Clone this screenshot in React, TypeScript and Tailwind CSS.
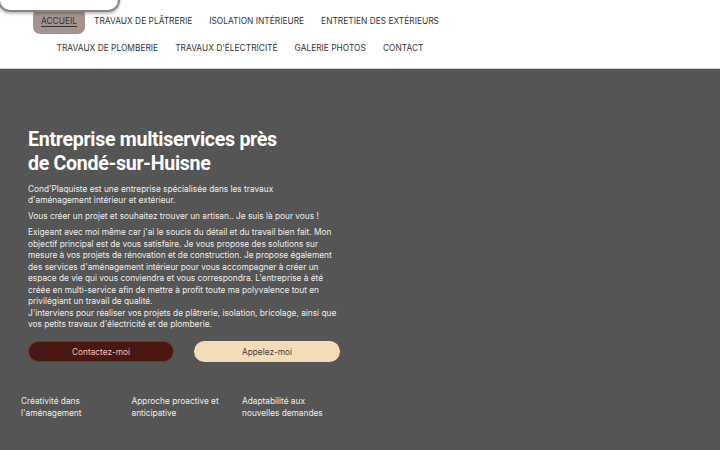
import React from "react";

const row1 = ["ACCUEIL", "TRAVAUX DE PLÂTRERIE", "ISOLATION INTÉRIEURE", "ENTRETIEN DES EXTÉRIEURS"];
const row2 = ["TRAVAUX DE PLOMBERIE", "TRAVAUX D'ÉLECTRICITÉ", "GALERIE PHOTOS", "CONTACT"];

function NavItem({ label, active }: { label: string; active?: boolean }) {
  return (
    <a
      href="#"
      className={
        "h-[26px] px-2 flex items-center rounded-[7px] text-[8.4px] text-[#333] whitespace-nowrap " +
        (active ? "bg-[#a5938f] underline underline-offset-2" : "")
      }
    >
      {label}
    </a>
  );
}

export default function App() {
  const body = { fontFamily: "Inter, 'Noto Sans', sans-serif" };
  return (
    <div className="w-full h-[450px] overflow-hidden bg-[#555555]" style={body}>
      <header className="relative h-[69px] bg-white border-b border-[#cfcfcf]">
        <div className="absolute left-[-2px] top-[-30px] w-[122px] h-[42px] bg-white border-2 border-[#8d8380] rounded-b-[12px] shadow-[0_2px_3px_rgba(0,0,0,0.25)]" />
        <nav className="w-[480px] pt-[8px] flex flex-col items-center">
          <div className="flex gap-px">
            {row1.map((l, i) => (
              <NavItem key={l} label={l} active={i === 0} />
            ))}
          </div>
          <div className="flex gap-px mt-px">
            {row2.map((l) => (
              <NavItem key={l} label={l} />
            ))}
          </div>
        </nav>
      </header>
      <main className="px-[28px] pt-[59px]">
        <h1
          className="text-white text-[19.6px] font-bold leading-[24px] tracking-[-0.3px]"
          style={{ fontFamily: "Roboto, sans-serif" }}
        >
          Entreprise multiservices près
          <br />
          de Condé-sur-Huisne
        </h1>
        <div className="mt-[8px] w-[315px] text-[8.3px] leading-[11.45px] text-[#eeeeee]">
          <p>
            Cond'Plaquiste est une entreprise spécialisée dans les travaux
            <br />
            d'aménagement intérieur et extérieur.
          </p>
          <p className="mt-[4.5px]">Vous créer un projet et souhaitez trouver un artisan.. Je suis là pour vous !</p>
          <p className="mt-[4.5px]">
            Exigeant avec moi même car j'ai le soucis du détail et du travail bien fait. Mon objectif principal est de
            vous satisfaire. Je vous propose des solutions sur mesure à vos projets de rénovation et de construction. Je
            propose également des services d'aménagement intérieur pour vous accompagner à créer un espace de vie qui
            vous conviendra et vous correspondra. L'entreprise à été créée en multi-service afin de mettre à profit toute
            ma polyvalence tout en privilégiant un travail de qualité.
            <br />
            J'interviens pour réaliser vos projets de plâtrerie, isolation, bricolage, ainsi que vos petits travaux
            d'électricité et de plomberie.
          </p>
        </div>
        <div className="mt-[11px] flex gap-[20px]">
          <button className="w-[146px] h-[21px] rounded-full bg-[#4a1711] border border-[#6a3a30] text-[8.3px] text-[#ecc9c0]">
            Contactez-moi
          </button>
          <button className="w-[146px] h-[21px] rounded-full bg-[#f4dcb9] text-[8.3px] text-[#4a3b30]">
            Appelez-moi
          </button>
        </div>
      </main>
      <section className="mt-[34px] pl-[21px] flex text-[8.3px] leading-[11.5px] text-[#eeeeee]">
        <div className="w-[110.5px]">
          Créativité dans
          <br />
          l'aménagement
        </div>
        <div className="w-[110.5px]">
          Approche proactive et
          <br />
          anticipative
        </div>
        <div className="w-[110.5px]">
          Adaptabilité aux
          <br />
          nouvelles demandes
        </div>
      </section>
    </div>
  );
}
